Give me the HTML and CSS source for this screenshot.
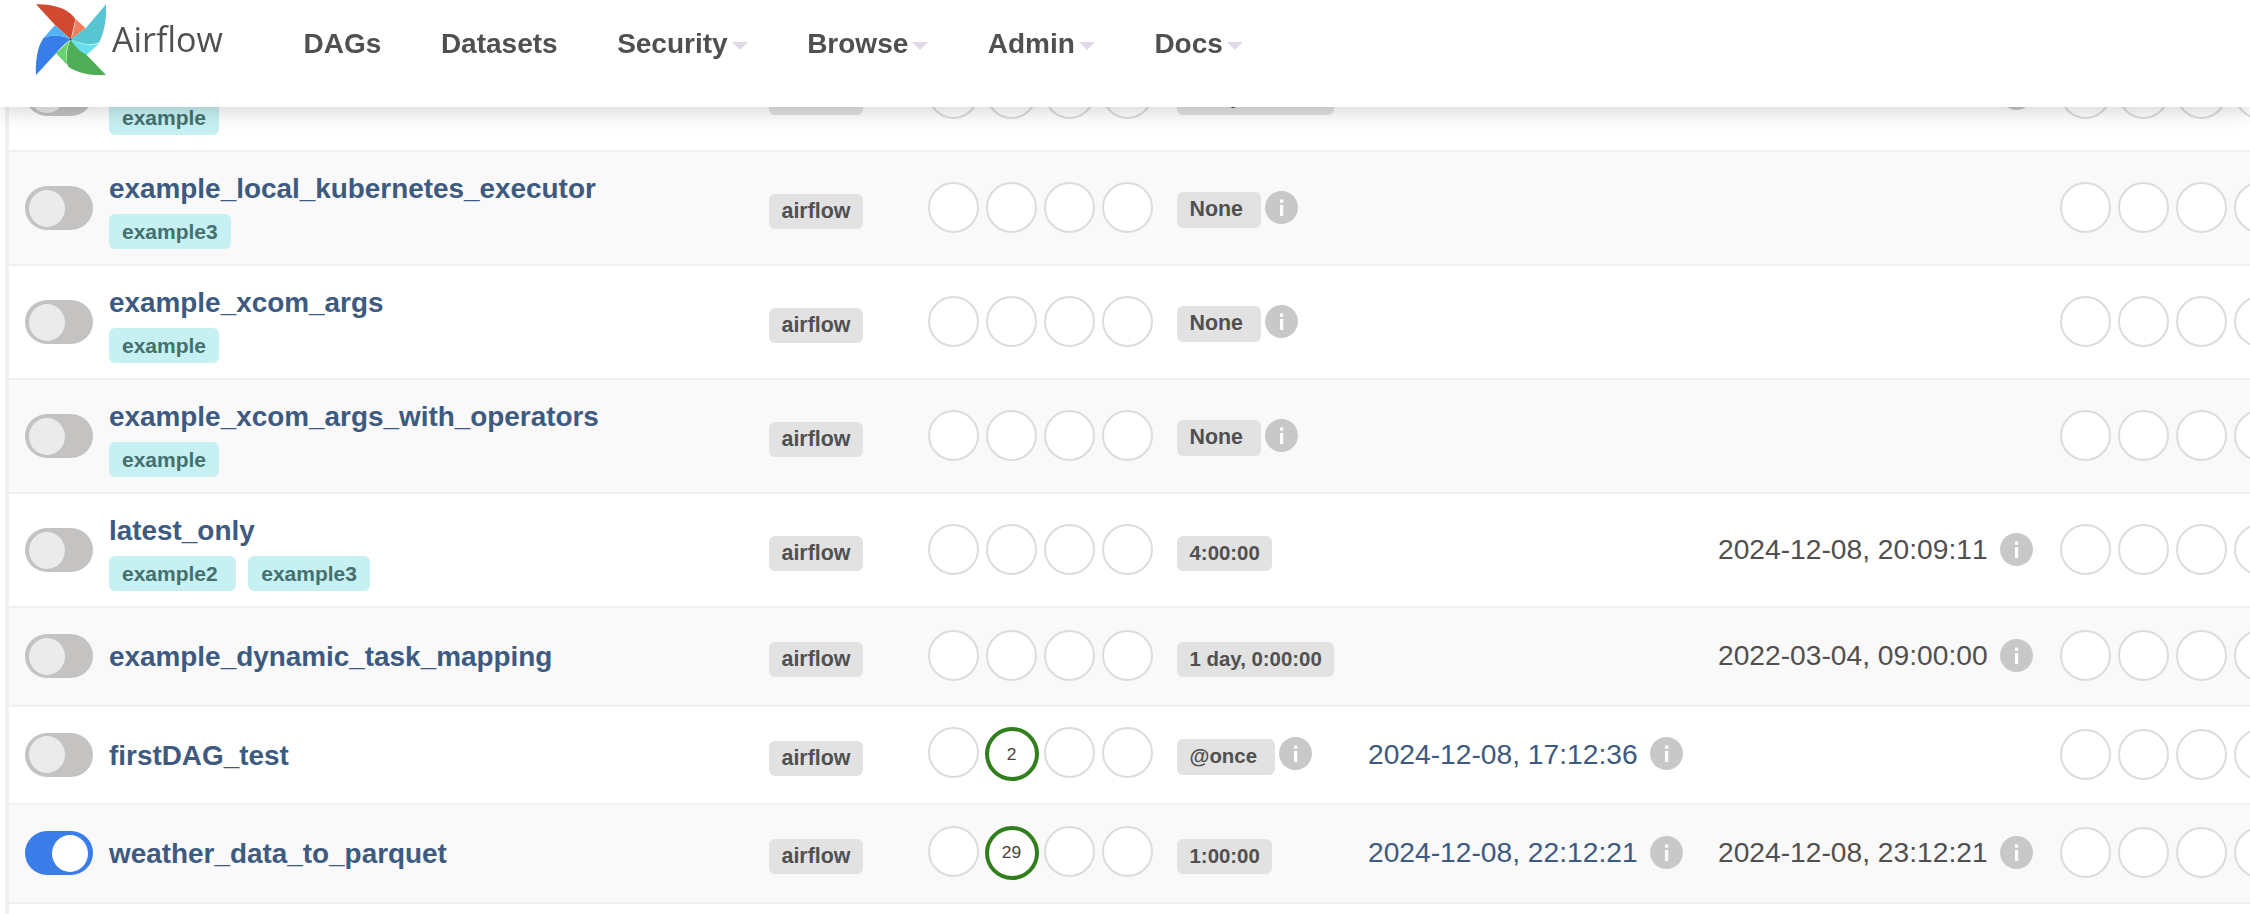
FILE: index.html
```html
<!DOCTYPE html>
<html lang="en">
<head>
<meta charset="utf-8">
<title>Airflow - DAGs</title>
<link rel="stylesheet" href="styles.css">
</head>
<body>
<svg class="defs" width="0" height="0" aria-hidden="true">
  <symbol id="info" viewBox="0 0 33 33">
    <circle cx="16.5" cy="16.5" r="16.5" fill="#c8c8c8"/>
    <rect x="15" y="8.5" width="3.2" height="3.2" fill="#fff"/>
    <rect x="15" y="14" width="3.2" height="11" fill="#fff"/>
  </symbol>
</svg>
<header class="navbar">
  <a class="brand" href="#">
    <svg class="logo" viewBox="0 0 240 240" aria-hidden="true">
      <path fill="#d14a30" d="M18 13C60 12 95 22 115 36C125 43 132 50 136 58C131 80 127 100 122 118L75 75Z"/>
      <path fill="#f07f60" d="M136 56L167 85L122 118C130 98 135 78 136 56Z"/>
      <path fill="#58c5d3" d="M228 13C230 55 225 90 208 127C185 138 150 132 122 118L167 85Z"/>
      <path fill="#66dfef" d="M122 118C150 132 180 139 208 130L170 165C150 160 134 140 122 118Z"/>
      <path fill="#4ead56" d="M228 225C180 227 140 218 115 200C106 183 108 150 122 118C134 140 150 155 170 165Z"/>
      <path fill="#66d36e" d="M78 160L108 132L122 118C108 145 104 170 113 196Z"/>
      <path fill="#377ee8" d="M18 225C16 185 22 140 40 115C65 102 95 105 122 118C105 130 90 145 78 160Z"/>
      <path fill="#52b2f5" d="M40 115L75 75L122 118C95 105 65 102 40 115Z"/>
      <circle cx="122" cy="118" r="3" fill="#3a4a44"/>
    </svg>
    <span class="brand-text">Airflow</span>
  </a>
  <nav class="menu">
    <a class="menu-item" href="#">DAGs</a>
    <a class="menu-item" href="#">Datasets</a>
    <a class="menu-item has-caret" href="#">Security</a>
    <a class="menu-item has-caret" href="#">Browse</a>
    <a class="menu-item has-caret" href="#">Admin</a>
    <a class="menu-item has-caret" href="#">Docs</a>
  </nav>
</header>

<main class="page">
  <div class="table">

    <div class="row">
      <div class="toggle"><span class="knob"></span></div>
      <div class="dag tagged"><a class="dag-name" href="#">example_kubernetes_executor</a><div class="tags"><span class="tag">example</span></div></div>
      <div class="owner"><span class="badge">airflow</span></div>
      <div class="circles"><span class="dot"></span><span class="dot"></span><span class="dot"></span><span class="dot"></span></div>
      <div class="schedule"><span class="badge">1 day, 0:00:00</span></div>
      <div class="date"></div>
      <div class="date"><span class="next">2024-12-08, 20:09:11</span><svg class="info"><use href="#info"/></svg></div>
      <div class="circles"><span class="dot"></span><span class="dot"></span><span class="dot"></span><span class="dot"></span></div>
    </div>

    <div class="row">
      <div class="toggle"><span class="knob"></span></div>
      <div class="dag tagged"><a class="dag-name" href="#">example_local_kubernetes_executor</a><div class="tags"><span class="tag">example3</span></div></div>
      <div class="owner"><span class="badge">airflow</span></div>
      <div class="circles"><span class="dot"></span><span class="dot"></span><span class="dot"></span><span class="dot"></span></div>
      <div class="schedule with-info"><span class="badge badge-none">None</span><svg class="info"><use href="#info"/></svg></div>
      <div class="date"></div>
      <div class="date"></div>
      <div class="circles"><span class="dot"></span><span class="dot"></span><span class="dot"></span><span class="dot"></span></div>
    </div>

    <div class="row">
      <div class="toggle"><span class="knob"></span></div>
      <div class="dag tagged"><a class="dag-name" href="#">example_xcom_args</a><div class="tags"><span class="tag">example</span></div></div>
      <div class="owner"><span class="badge">airflow</span></div>
      <div class="circles"><span class="dot"></span><span class="dot"></span><span class="dot"></span><span class="dot"></span></div>
      <div class="schedule with-info"><span class="badge badge-none">None</span><svg class="info"><use href="#info"/></svg></div>
      <div class="date"></div>
      <div class="date"></div>
      <div class="circles"><span class="dot"></span><span class="dot"></span><span class="dot"></span><span class="dot"></span></div>
    </div>

    <div class="row">
      <div class="toggle"><span class="knob"></span></div>
      <div class="dag tagged"><a class="dag-name" href="#">example_xcom_args_with_operators</a><div class="tags"><span class="tag">example</span></div></div>
      <div class="owner"><span class="badge">airflow</span></div>
      <div class="circles"><span class="dot"></span><span class="dot"></span><span class="dot"></span><span class="dot"></span></div>
      <div class="schedule with-info"><span class="badge badge-none">None</span><svg class="info"><use href="#info"/></svg></div>
      <div class="date"></div>
      <div class="date"></div>
      <div class="circles"><span class="dot"></span><span class="dot"></span><span class="dot"></span><span class="dot"></span></div>
    </div>

    <div class="row">
      <div class="toggle"><span class="knob"></span></div>
      <div class="dag tagged"><a class="dag-name" href="#">latest_only</a><div class="tags"><span class="tag">example2</span><span class="tag">example3</span></div></div>
      <div class="owner"><span class="badge">airflow</span></div>
      <div class="circles"><span class="dot"></span><span class="dot"></span><span class="dot"></span><span class="dot"></span></div>
      <div class="schedule"><span class="badge">4:00:00</span></div>
      <div class="date"></div>
      <div class="date"><span class="next">2024-12-08, 20:09:11</span><svg class="info"><use href="#info"/></svg></div>
      <div class="circles"><span class="dot"></span><span class="dot"></span><span class="dot"></span><span class="dot"></span></div>
    </div>

    <div class="row single">
      <div class="toggle"><span class="knob"></span></div>
      <div class="dag"><a class="dag-name" href="#">example_dynamic_task_mapping</a></div>
      <div class="owner"><span class="badge">airflow</span></div>
      <div class="circles"><span class="dot"></span><span class="dot"></span><span class="dot"></span><span class="dot"></span></div>
      <div class="schedule"><span class="badge">1 day, 0:00:00</span></div>
      <div class="date"></div>
      <div class="date"><span class="next">2022-03-04, 09:00:00</span><svg class="info"><use href="#info"/></svg></div>
      <div class="circles"><span class="dot"></span><span class="dot"></span><span class="dot"></span><span class="dot"></span></div>
    </div>

    <div class="row single">
      <div class="toggle"><span class="knob"></span></div>
      <div class="dag"><a class="dag-name" href="#">firstDAG_test</a></div>
      <div class="owner"><span class="badge">airflow</span></div>
      <div class="circles"><span class="dot"></span><span class="dot success">2</span><span class="dot"></span><span class="dot"></span></div>
      <div class="schedule with-info"><span class="badge">@once</span><svg class="info"><use href="#info"/></svg></div>
      <div class="date"><a class="last" href="#">2024-12-08, 17:12:36</a><svg class="info"><use href="#info"/></svg></div>
      <div class="date"></div>
      <div class="circles"><span class="dot"></span><span class="dot"></span><span class="dot"></span><span class="dot"></span></div>
    </div>

    <div class="row single">
      <div class="toggle on"><span class="knob"></span></div>
      <div class="dag"><a class="dag-name" href="#">weather_data_to_parquet</a></div>
      <div class="owner"><span class="badge">airflow</span></div>
      <div class="circles"><span class="dot"></span><span class="dot success">29</span><span class="dot"></span><span class="dot"></span></div>
      <div class="schedule"><span class="badge">1:00:00</span></div>
      <div class="date"><a class="last" href="#">2024-12-08, 22:12:21</a><svg class="info"><use href="#info"/></svg></div>
      <div class="date"><span class="next">2024-12-08, 23:12:21</span><svg class="info"><use href="#info"/></svg></div>
      <div class="circles"><span class="dot"></span><span class="dot"></span><span class="dot"></span><span class="dot"></span></div>
    </div>

  </div>
</main>
</body>
</html>
```
FILE: styles.css
```css
* { box-sizing: border-box; }

html, body {
  margin: 0;
  padding: 0;
  height: 914px;
  overflow: hidden;
  background: #fff;
  font-family: "Liberation Sans", Arial, sans-serif;
  color: #51504f;
}

a { text-decoration: none; color: inherit; }

.defs { display: block; height: 0; }

/* Navbar */
.navbar {
  position: fixed;
  top: 0;
  left: 0;
  right: 0;
  height: 107px;
  z-index: 10;
  display: flex;
  align-items: flex-start;
  padding-left: 30px;
  background: #fff;
  box-shadow: 0 2px 22px rgba(0, 0, 0, 0.2);
}

.brand {
  display: flex;
  align-items: flex-start;
  width: 273.6px;
}

.logo {
  width: 80px;
  height: 80px;
  flex: none;
}

.brand-text {
  margin: 17px 0 0 2px;
  font-family: "Open Sans", sans-serif;
  font-weight: 400;
  font-size: 34px;
  line-height: 45px;
  color: #51504f;
}

.menu {
  display: flex;
  gap: 59.5px;
  padding-top: 27px;
}

.menu-item {
  display: flex;
  align-items: center;
  height: 34px;
  font-size: 28px;
  font-weight: 700;
  color: #51504f;
}

.has-caret::after {
  content: "";
  margin: 4px 0 0 4px;
  border-top: 8px solid #e2d9e8;
  border-left: 8.5px solid transparent;
  border-right: 8.5px solid transparent;
}

/* Page and table */
.page {
  display: flex;
  flex-direction: column;
  height: 914px;
  padding: 38px 0 0 5px;
}

.table {
  flex: 1;
  border-left: 4px solid #f0f0f0;
  overflow: hidden;
}

.row {
  display: grid;
  grid-template-columns: 84px 660px 159px 249px 191px 350px 342px 300px;
  align-items: center;
  width: 2400px;
  height: 114px;
  padding-left: 16px;
  border-bottom: 2px solid #f0f0f0;
  background: #fff;
}

.row.single { height: 98.6px; }

.row:nth-child(even) { background: #f9f9f9; }

/* Toggle */
.toggle {
  display: flex;
  align-items: center;
  width: 68px;
  height: 44px;
  padding: 0 3.5px;
  border-radius: 22px;
  background: #c4c3c1;
}

.knob {
  width: 36px;
  height: 37px;
  border-radius: 50%;
  background: #ebebeb;
}

.toggle.on {
  justify-content: flex-end;
  padding-right: 5px;
  background: #3a7de8;
}

.toggle.on .knob { background: #fff; }

/* DAG name and tags */
.dag { margin-top: 2px; }

.dag.tagged { margin-top: 4px; }

.dag-name {
  display: block;
  font-size: 27.9px;
  font-weight: 700;
  line-height: 36px;
  color: #3d5a80;
}

.tags {
  display: flex;
  gap: 12.5px;
  margin-top: 7px;
}

.tag {
  height: 35px;
  padding: 0 13px;
  border-radius: 6px;
  background: #c7f0f2;
  color: #43716f;
  font-size: 21px;
  font-weight: 700;
  line-height: 35px;
}

.tag:not(:last-child) { padding-right: 18px; }

/* Badges */
.badge {
  display: inline-block;
  height: 35px;
  padding: 0 12.5px;
  border-radius: 6px;
  background: #e2e2e2;
  color: #51504f;
  font-size: 21.4px;
  font-weight: 700;
  line-height: 35px;
}

.owner { margin-top: 7px; display: flex; }

.schedule {
  display: flex;
  align-items: center;
  gap: 4px;
  margin-top: 7px;
}

.schedule .badge { font-size: 20.4px; }

.schedule.with-info { margin-top: 0; }

.schedule.with-info .badge {
  height: 36px;
  margin-top: 4px;
  padding-right: 18px;
  line-height: 35px;
}

.schedule .badge-none { font-size: 21.4px; }

.schedule.with-info .info { margin-top: -2px; }

/* Run circles */
.circles {
  display: flex;
  gap: 7px;
  margin-top: -1px;
}

.dot {
  display: flex;
  align-items: center;
  justify-content: center;
  flex: none;
  width: 51px;
  height: 51px;
  border: 2px solid #dcdcdc;
  border-radius: 50%;
  background: #fff;
  font-size: 17.4px;
  color: #444;
}

.dot.success {
  width: 54px;
  height: 54px;
  margin: 0 -1.5px;
  border: 4px solid #317f1c;
}

/* Dates */
.date {
  display: flex;
  align-items: center;
  margin-top: -2px;
  font-size: 28.2px;
  font-kerning: none;
  line-height: 36px;
}

.last { color: #3d5a80; }

.next { color: #51504f; }

.info {
  flex: none;
  width: 33px;
  height: 33px;
  margin-left: 12px;
}

.schedule .info { margin-left: 0; }
```
